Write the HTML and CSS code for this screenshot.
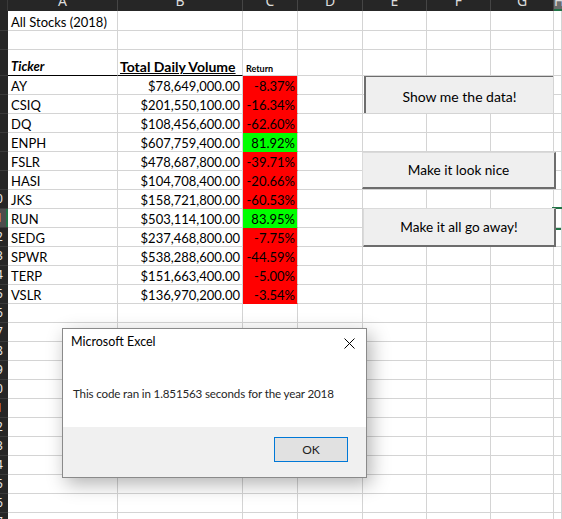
FILE: index.html
```html
<!DOCTYPE html>
<html>
<head>
<meta charset="utf-8">
<title>All Stocks (2018)</title>
<link rel="stylesheet" href="styles.css">
</head>
<body>
<div class="sheet">
  <div class="row head">
    <div class="corner"></div>
    <div class="ch"><span>A</span></div>
    <div class="ch"><span>B</span></div>
    <div class="ch"><span>C</span></div>
    <div class="ch"><span>D</span></div>
    <div class="ch"><span>E</span></div>
    <div class="ch"><span>F</span></div>
    <div class="ch"><span>G</span></div>
    <div class="ch chsel"><span>H</span></div>
  </div>

  <div class="row r1"><div class="rh"><span>1</span></div><div class="c">All Stocks (2018)</div><div class="c"></div><div class="c"></div><div class="c"></div><div class="c"></div><div class="c"></div><div class="c"></div><div class="c"></div></div>
  <div class="row"><div class="rh"><span>2</span></div><div class="c"></div><div class="c"></div><div class="c"></div><div class="c"></div><div class="c"></div><div class="c"></div><div class="c"></div><div class="c"></div></div>
  <div class="row r3"><div class="rh"><span>3</span></div><div class="c th ticker">Ticker</div><div class="c th vol">Total Daily Volume</div><div class="c ret-h">Return</div><div class="c"></div><div class="c"></div><div class="c"></div><div class="c"></div><div class="c"></div></div>

  <div class="row"><div class="rh"><span>4</span></div><div class="c">AY</div><div class="c num">$78,649,000.00</div><div class="c num neg">-8.37%</div><div class="c"></div><div class="c"></div><div class="c"></div><div class="c"></div><div class="c"></div></div>
  <div class="row"><div class="rh"><span>5</span></div><div class="c">CSIQ</div><div class="c num">$201,550,100.00</div><div class="c num neg">-16.34%</div><div class="c"></div><div class="c"></div><div class="c"></div><div class="c"></div><div class="c"></div></div>
  <div class="row"><div class="rh"><span>6</span></div><div class="c">DQ</div><div class="c num">$108,456,600.00</div><div class="c num neg">-62.60%</div><div class="c"></div><div class="c"></div><div class="c"></div><div class="c"></div><div class="c"></div></div>
  <div class="row"><div class="rh"><span>7</span></div><div class="c">ENPH</div><div class="c num">$607,759,400.00</div><div class="c num pos">81.92%</div><div class="c"></div><div class="c"></div><div class="c"></div><div class="c"></div><div class="c"></div></div>
  <div class="row"><div class="rh"><span>8</span></div><div class="c">FSLR</div><div class="c num">$478,687,800.00</div><div class="c num neg">-39.71%</div><div class="c"></div><div class="c"></div><div class="c"></div><div class="c"></div><div class="c"></div></div>
  <div class="row"><div class="rh"><span>9</span></div><div class="c">HASI</div><div class="c num">$104,708,400.00</div><div class="c num neg">-20.66%</div><div class="c"></div><div class="c"></div><div class="c"></div><div class="c"></div><div class="c"></div></div>
  <div class="row"><div class="rh"><span>10</span></div><div class="c">JKS</div><div class="c num">$158,721,800.00</div><div class="c num neg">-60.53%</div><div class="c"></div><div class="c"></div><div class="c"></div><div class="c"></div><div class="c"></div></div>
  <div class="row"><div class="rh rhsel"><span>11</span></div><div class="c">RUN</div><div class="c num">$503,114,100.00</div><div class="c num pos">83.95%</div><div class="c"></div><div class="c"></div><div class="c"></div><div class="c"></div><div class="c cellsel"></div></div>
  <div class="row"><div class="rh"><span>12</span></div><div class="c">SEDG</div><div class="c num">$237,468,800.00</div><div class="c num neg">-7.75%</div><div class="c"></div><div class="c"></div><div class="c"></div><div class="c"></div><div class="c"></div></div>
  <div class="row"><div class="rh"><span>13</span></div><div class="c">SPWR</div><div class="c num">$538,288,600.00</div><div class="c num neg">-44.59%</div><div class="c"></div><div class="c"></div><div class="c"></div><div class="c"></div><div class="c"></div></div>
  <div class="row"><div class="rh"><span>14</span></div><div class="c">TERP</div><div class="c num">$151,663,400.00</div><div class="c num neg">-5.00%</div><div class="c"></div><div class="c"></div><div class="c"></div><div class="c"></div><div class="c"></div></div>
  <div class="row"><div class="rh"><span>15</span></div><div class="c">VSLR</div><div class="c num">$136,970,200.00</div><div class="c num neg">-3.54%</div><div class="c"></div><div class="c"></div><div class="c"></div><div class="c"></div><div class="c"></div></div>

  <div class="row"><div class="rh"><span>16</span></div><div class="c"></div><div class="c"></div><div class="c"></div><div class="c"></div><div class="c"></div><div class="c"></div><div class="c"></div><div class="c"></div></div>
  <div class="row"><div class="rh"><span>17</span></div><div class="c"></div><div class="c"></div><div class="c"></div><div class="c"></div><div class="c"></div><div class="c"></div><div class="c"></div><div class="c"></div></div>
  <div class="row"><div class="rh"><span>18</span></div><div class="c"></div><div class="c"></div><div class="c"></div><div class="c"></div><div class="c"></div><div class="c"></div><div class="c"></div><div class="c"></div></div>
  <div class="row"><div class="rh"><span>19</span></div><div class="c"></div><div class="c"></div><div class="c"></div><div class="c"></div><div class="c"></div><div class="c"></div><div class="c"></div><div class="c"></div></div>
  <div class="row"><div class="rh"><span>20</span></div><div class="c"></div><div class="c"></div><div class="c"></div><div class="c"></div><div class="c"></div><div class="c"></div><div class="c"></div><div class="c"></div></div>
  <div class="row"><div class="rh rhmark"><span>21</span></div><div class="c"></div><div class="c"></div><div class="c"></div><div class="c"></div><div class="c"></div><div class="c"></div><div class="c"></div><div class="c"></div></div>
  <div class="row"><div class="rh"><span>22</span></div><div class="c"></div><div class="c"></div><div class="c"></div><div class="c"></div><div class="c"></div><div class="c"></div><div class="c"></div><div class="c"></div></div>
  <div class="row"><div class="rh"><span>23</span></div><div class="c"></div><div class="c"></div><div class="c"></div><div class="c"></div><div class="c"></div><div class="c"></div><div class="c"></div><div class="c"></div></div>
  <div class="row"><div class="rh"><span>24</span></div><div class="c"></div><div class="c"></div><div class="c"></div><div class="c"></div><div class="c"></div><div class="c"></div><div class="c"></div><div class="c"></div></div>
  <div class="row"><div class="rh"><span>25</span></div><div class="c"></div><div class="c"></div><div class="c"></div><div class="c"></div><div class="c"></div><div class="c"></div><div class="c"></div><div class="c"></div></div>
  <div class="row"><div class="rh"><span>26</span></div><div class="c"></div><div class="c"></div><div class="c"></div><div class="c"></div><div class="c"></div><div class="c"></div><div class="c"></div><div class="c"></div></div>
  <div class="row"><div class="rh"><span>27</span></div><div class="c"></div><div class="c"></div><div class="c"></div><div class="c"></div><div class="c"></div><div class="c"></div><div class="c"></div><div class="c"></div></div>

  <div class="xbtn btn-show">Show me the data!</div>
  <div class="xbtn raised btn-nice">Make it look nice</div>
  <div class="xbtn raised btn-away">Make it all go away!</div>

  <div class="dlg">
    <div class="dlg-title">
      <span>Microsoft Excel</span>
      <svg class="close" width="11" height="11" viewBox="0 0 11 11"><path d="M0.5 0.5 L10.5 10.5 M10.5 0.5 L0.5 10.5" stroke="#000" stroke-width="1" fill="none"/></svg>
    </div>
    <div class="dlg-body">This code ran in 1.851563 seconds for the year 2018</div>
    <div class="dlg-foot"><div class="ok">OK</div></div>
  </div>
</div>
</body>
</html>
```

FILE: styles.css
```css
* { box-sizing: border-box; margin: 0; padding: 0; }
html, body { width: 562px; height: 519px; overflow: hidden; background: #fff; }
body { font-family: Lato, "Liberation Sans", sans-serif; font-size: 13px; color: #000; }

.sheet { position: relative; width: 562px; height: 519px; overflow: hidden; }

.row {
  display: grid;
  grid-template-columns: 8px 110px 125px 55px 65px 64px 64px 63px 1fr;
  height: 19px;
}
.head { height: 11px; background: #262626; }
.r1 { height: 20px; }
.r3 { height: 26px; }

.corner { background: #262626; border-right: 1px solid #3a3a3a; }
.ch {
  border-right: 1px solid #454545;
  color: #dcdcdc;
  text-align: center;
  font-family: "Noto Sans", sans-serif;
  font-size: 14px;
  line-height: 16px;
  overflow: hidden;
}
.ch span { display: block; margin-top: -7px; }
.chsel { background: #6b6b6b; border-bottom: 2px solid #217346; border-right: 0; }

.rh {
  background: #262626;
  border-bottom: 1px solid #3a3a3a;
  display: flex;
  justify-content: flex-end;
  overflow: hidden;
  color: #e8e8e8;
  font-family: "Noto Sans", sans-serif;
  font-size: 12px;
  line-height: 18px;
}
.rh span { flex: 0 0 24px; text-align: center; }
.rhsel { background: #4d4d4d; color: #f0a53a; box-shadow: inset -2px 0 0 #217346; }
.rhmark { color: #f0a53a; }

.c {
  border-right: 1px solid #d4d4d4;
  border-bottom: 1px solid #d4d4d4;
  display: flex;
  align-items: flex-end;
  line-height: 15px;
  padding: 0 2px 0 3px;
  white-space: nowrap;
  overflow: hidden;
}
.num { justify-content: flex-end; }
.neg { background: #ff0000; border-bottom-color: #ff0000; }
.pos { background: #00ff00; border-bottom-color: #00ff00; }

.th { border-bottom-color: #000; padding-bottom: 1px; font-weight: 700; }
.ticker { font-style: italic; }
.vol { text-decoration: underline; padding-left: 2px; font-size: 14px; }
.ret-h { font-size: 9px; font-weight: 700; line-height: 10px; padding-bottom: 1px; }

.cellsel { outline: 2px solid #217346; outline-offset: 0; }

.xbtn {
  position: absolute;
  display: flex;
  align-items: center;
  justify-content: center;
  background: #efefef;
  font-size: 13.6px;
  color: #000;
}
.btn-show {
  left: 364px; top: 76px; width: 189px; height: 37px;
  border-top: 1px solid #6d6d6d;
  border-left: 2px solid #6d6d6d;
  padding-top: 2px;
  font-size: 14px;
}
.raised {
  border-top: 1px solid #dadada;
  border-left: 1px solid #dadada;
  border-right: 2px solid #6d6d6d;
  border-bottom: 2px solid #6d6d6d;
}
.btn-nice { left: 362px; top: 152px; width: 194px; height: 37px; }
.btn-away { left: 363px; top: 208px; width: 193px; height: 39px; }

.dlg {
  position: absolute;
  left: 62px; top: 328px;
  width: 305px; height: 150px;
  background: #fff;
  border: 1px solid #8a8a8a;
  box-shadow: 4px 6px 18px rgba(0, 0, 0, 0.3);
  display: flex;
  flex-direction: column;
  font-family: Lato, "Liberation Sans", sans-serif;
  font-size: 12px;
  line-height: 16px;
}
.dlg-title {
  height: 32px;
  padding: 5px 11px 0 8px;
  display: flex;
  justify-content: space-between;
  align-items: flex-start;
  color: #000;
  font-size: 12.5px;
}
.close { margin-top: 4px; }
.dlg-body {
  flex: 1;
  padding: 25px 0 0 10px;
  color: #262626;
  white-space: nowrap;
  font-size: 11.6px;
  letter-spacing: -0.15px;
}
.dlg-foot {
  height: 50px;
  background: #f0f0f0;
  display: flex;
  justify-content: flex-end;
  padding: 10px 18px 0 0;
}
.ok {
  width: 74px; height: 25px;
  background: #e1e1e1;
  border: 1px solid #0078d7;
  display: flex;
  align-items: center;
  justify-content: center;
  color: #222;
}
```
